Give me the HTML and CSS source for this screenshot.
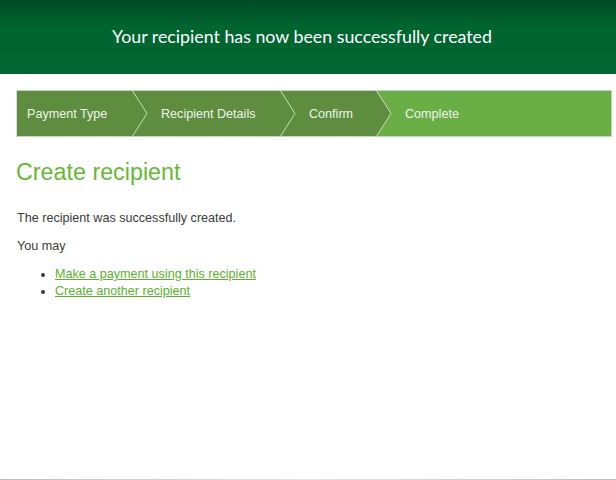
FILE: index.html
```html
<!DOCTYPE html>
<html lang="en">
  <head>
    <meta charset="utf-8">
    <title>Create recipient</title>
    <link rel="stylesheet" href="styles.css">
  </head>
  <body>
    <div class="page">
      <div class="banner">Your recipient has now been successfully created</div>

      <div class="steps">
        <div class="step step-type">Payment Type
          <svg class="arrow" width="17" height="45" viewBox="0 0 17 45"><polygon points="0,0 1,0 16,22.5 1,45 0,45" fill="#5f8d3f"/><polyline points="1,-1 16,22.5 1,46" fill="none" stroke="#c9dcb8" stroke-width="1"/></svg>
        </div>
        <div class="step step-details">Recipient Details
          <svg class="arrow" width="17" height="45" viewBox="0 0 17 45"><polygon points="0,0 1,0 16,22.5 1,45 0,45" fill="#5f8d3f"/><polyline points="1,-1 16,22.5 1,46" fill="none" stroke="#c9dcb8" stroke-width="1"/></svg>
        </div>
        <div class="step step-confirm">Confirm
          <svg class="arrow" width="17" height="45" viewBox="0 0 17 45"><polygon points="0,0 1,0 16,22.5 1,45 0,45" fill="#5f8d3f"/><polyline points="1,-1 16,22.5 1,46" fill="none" stroke="#c9dcb8" stroke-width="1"/></svg>
        </div>
        <div class="step step-done">Complete</div>
      </div>

      <div class="content">
        <h1>Create recipient</h1>
        <p>The recipient was successfully created.</p>
        <p>You may</p>
        <ul>
          <li><a href="#">Make a payment using this recipient</a></li>
          <li><a href="#">Create another recipient</a></li>
        </ul>
      </div>

      <div class="footer"></div>
    </div>
  </body>
</html>
```

FILE: styles.css
```css
body {
    margin: 0;
    font-family: 'Liberation Sans', Arial, sans-serif;
    color: #3a3a3a;
    background: white;
}
.page {
    height: 480px;
    display: flex;
    flex-direction: column;
}
.banner {
    height: 74px;
    display: flex;
    align-items: center;
    justify-content: center;
    background: linear-gradient(#004a26, #00652f 35%, #006633);
    color: white;
    font-family: Lato, sans-serif;
    font-size: 17.8px;
    padding: 0 12px 2px 0;
    box-sizing: border-box;
}

.steps {
    display: flex;
    margin: 16px 4px 0 16px;
    height: 45px;
    border: 1px solid #c8d2c2;
    border-left-color: #d8ded4;
    color: #eef4ea;
    font-size: 12.6px;
}
.step {
    position: relative;
    display: flex;
    align-items: center;
    background-color: #5f8d3f;
    padding-left: 29px;
    box-sizing: border-box;
}
.step-type {
    width: 115px;
    padding-left: 10px;
}
.step-details { width: 148px; }
.step-confirm { width: 96px; }
.step-done {
    flex: 1;
    background-color: #6aae46;
}
.arrow {
    position: absolute;
    top: 0;
    right: -16px;
    z-index: 1;
}

.content {
    flex: 1;
    padding: 0 17px;
    font-size: 12.6px;
}
h1 {
    margin: 22px 0 25px -1px;
    font-weight: normal;
    font-size: 23.3px;
    color: #66b934;
}
p {
    margin: 0 0 14px;
}
ul {
    margin: -1px 0 0;
    padding-left: 38px;
    line-height: 16.5px;
}
a {
    color: #5bb22c;
}
.footer {
    height: 1px;
    background: linear-gradient(to right, #bdbdbd, #e4e4e4 50%, #bdbdbd);
}
```
